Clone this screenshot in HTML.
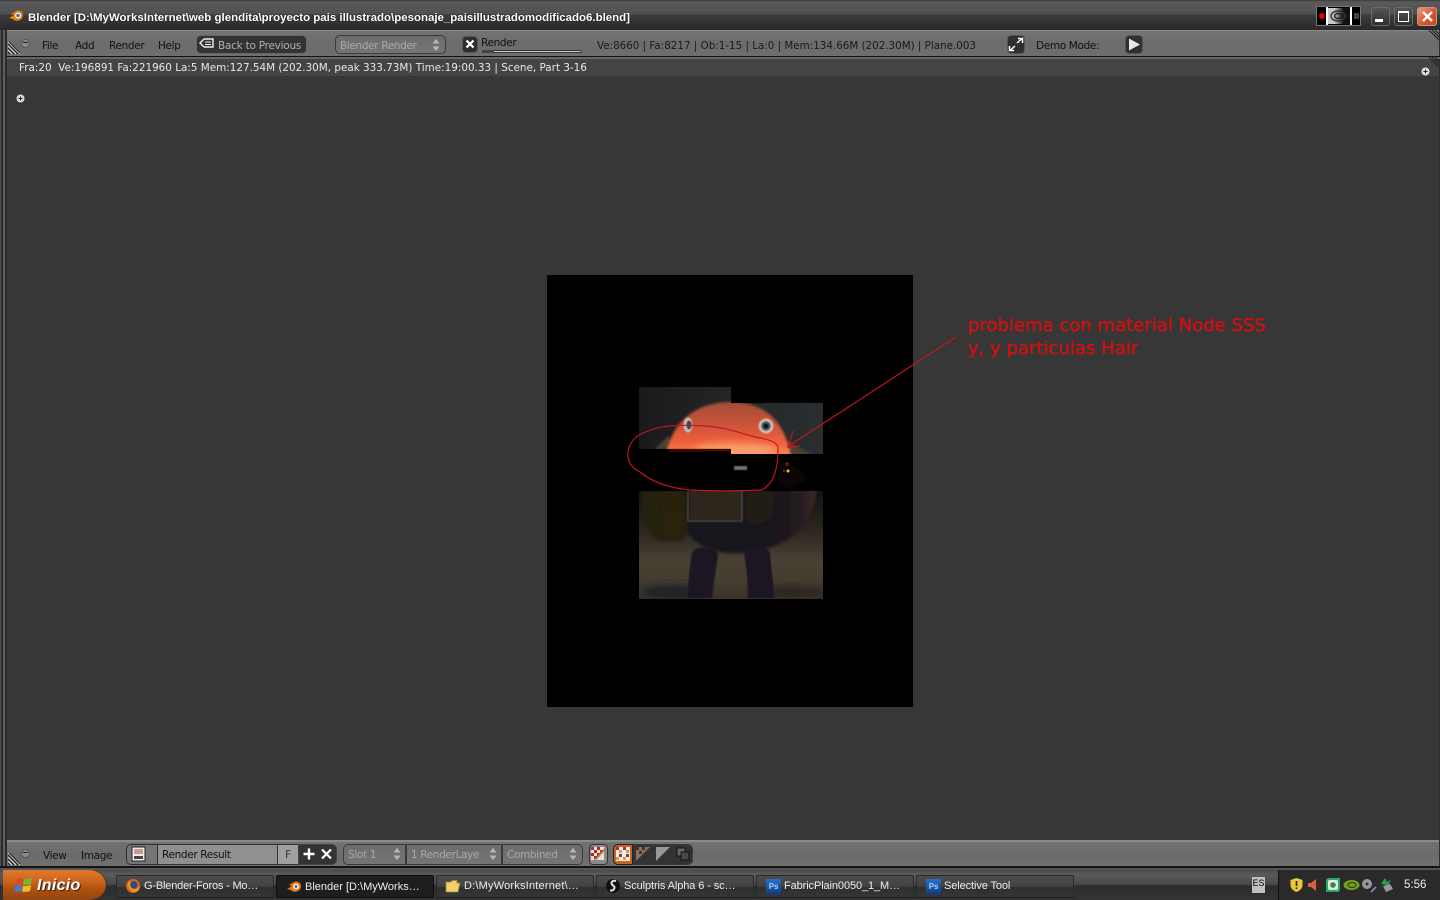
<!DOCTYPE html>
<html><head><meta charset="utf-8"><title>Blender</title>
<style>
html,body{margin:0;padding:0;width:1440px;height:900px;overflow:hidden;background:#373737}
body{position:relative;font-family:"DejaVu Sans","Liberation Sans",sans-serif;font-size:10.5px;letter-spacing:-.35px;color:#111}
.a{position:absolute;white-space:nowrap}
.hd{background:linear-gradient(#747474,#6c6c6c 50%,#6e6e6e);border-top:2px solid #8a8a8a;box-sizing:border-box}
.t{position:absolute;white-space:nowrap;line-height:13px}
.i{letter-spacing:0;font-size:10.33px}
.drk{position:absolute;box-sizing:border-box;background:#333;border:1px solid #555;border-radius:4px}
.tb{position:absolute;top:875px;height:23px;box-sizing:border-box;background:linear-gradient(#4c4c4c,#424242 50%,#2e2e2e 55%,#363636);border:1px solid #292929;border-bottom-color:#1d1d1d;border-radius:2px;color:#eee;font:11px/21px "Liberation Sans",sans-serif;letter-spacing:-.1px;white-space:nowrap}
.tb span{position:absolute;left:27px;top:0}
.sel{position:absolute;box-sizing:border-box;background:linear-gradient(#6c6c6c,#757575);border:1px solid #3a3a3a;color:#a8a8a8;line-height:21px}
</style></head><body>

<!-- title bar -->
<div class="a" style="left:0;top:0;width:1440px;height:30px;background:linear-gradient(#3a3a3a,#5a5a5a 2px,#505050 14px,#3c3c3c 15px,#2a2a2a 29px)"></div>
<svg class="a" style="left:8px;top:9px" width="17" height="14" viewBox="0 0 17 14"><path d="M1 9 L6 6 L3 5 L9 1.500 C14 1 16 5 14.500 8.500 C13 12 7 13 5 10 Z" fill="#e87d0d"/><circle cx="10" cy="6.500" r="3" fill="#fff"/><circle cx="10" cy="6.500" r="1.700" fill="#2a6fb5"/></svg>
<div class="t" style="left:28px;top:11px;color:#fff;font:bold 11.47px/14px 'Liberation Sans',sans-serif;letter-spacing:0;text-shadow:0 0 1px #000">Blender [D:\MyWorksInternet\web glendita\proyecto pais illustrado\pesonaje_paisillustradomodificado6.blend]</div>

<!-- nvidia tray in titlebar -->
<div class="a" style="left:1316px;top:6px;width:45px;height:20px;background:#000;border:1px solid #777;box-sizing:border-box"></div>
<div class="a" style="left:1319px;top:13px;width:6px;height:6px;border-radius:50%;background:#e00000"></div>
<div class="a" style="left:1326px;top:7px;width:2px;height:18px;background:#fff"></div>
<div class="a" style="left:1350px;top:7px;width:2px;height:18px;background:#fff"></div>
<div class="a" style="left:1328px;top:8px;width:22px;height:16px;background:linear-gradient(90deg,#c8c8c8 30%,#111 70%)"></div>
<svg class="a" style="left:1329px;top:9px" width="20" height="14" viewBox="0 0 20 14"><ellipse cx="9" cy="7" rx="7" ry="5" fill="none" stroke="#333" stroke-width="1.500"/><ellipse cx="9" cy="7" rx="3.500" ry="2.500" fill="none" stroke="#222" stroke-width="1.500"/></svg>
<div class="a" style="left:1354px;top:13px;width:5px;height:6px;background:#444"></div>

<div class="a" style="left:1371px;top:7px;width:19px;height:19px;box-sizing:border-box;border:1px solid #6a6a6a;border-radius:3px;background:linear-gradient(#555,#2e2e2e)"></div>
<div class="a" style="left:1375px;top:19px;width:8px;height:3px;background:#fff"></div>
<div class="a" style="left:1394px;top:7px;width:19px;height:19px;box-sizing:border-box;border:1px solid #6a6a6a;border-radius:3px;background:linear-gradient(#555,#2e2e2e)"></div>
<div class="a" style="left:1398px;top:11px;width:11px;height:11px;box-sizing:border-box;border:1px solid #fff;border-top-width:2px"></div>
<div class="a" style="left:1417px;top:7px;width:20px;height:19px;box-sizing:border-box;border:1px solid #b89a8a;border-radius:3px;background:linear-gradient(135deg,#f09a7a,#d8502a 60%,#c84a24)"></div>
<svg class="a" style="left:1421px;top:10px" width="13" height="13" viewBox="0 0 13 13"><path d="M2 2 L11 11 M11 2 L2 11" stroke="#fff" stroke-width="2.400"/></svg>

<!-- window edges -->
<div class="a" style="left:0;top:30px;width:7px;height:839px;background:#2b2b2b"></div>
<div class="a" style="left:0;top:30px;width:1px;height:839px;background:#505050"></div>
<div class="a" style="left:3px;top:30px;width:2px;height:839px;background:#5e5e5e"></div>
<div class="a" style="left:1439px;top:30px;width:1px;height:839px;background:#2e2e2e"></div>

<!-- top header -->
<div class="a hd" style="left:7px;top:30px;width:1432px;height:26px;border-top-width:1px"></div>
<div class="a" style="left:7px;top:56px;width:1433px;height:1px;background:#111"></div>
<div class="a" style="left:7px;top:57px;width:1433px;height:2px;background:#666"></div>
<svg class="a" style="left:7px;top:41px" width="14" height="14" viewBox="0 0 14 14"><path d="M1 1L13 13M1 5L9 13M1 9L5 13" stroke="#ddd" stroke-width="1"/><path d="M2 1L13 12M1 3L11 13M1 7L7 13M1 11L3 13" stroke="#222" stroke-width="1"/></svg>
<svg class="a" style="left:1428px;top:30px" width="11" height="11" viewBox="0 0 11 11"><path d="M1 0L11 10M4 0L11 7M7 0L11 4" stroke="#222"/></svg>
<div class="a" style="left:21px;top:39px;width:7px;height:7px;border-radius:50%;background:#8a8a8a;border:1px solid #555"></div>
<div class="a" style="left:23px;top:42px;width:5px;height:1px;background:#222"></div>
<div class="t" style="left:42px;top:40px">File</div>
<div class="t" style="left:75px;top:40px">Add</div>
<div class="t" style="left:109px;top:40px">Render</div>
<div class="t" style="left:158px;top:40px">Help</div>
<div class="drk" style="left:196px;top:35px;width:111px;height:19px;border-radius:5px;border-color:#666"></div>
<svg class="a" style="left:199px;top:37px" width="16" height="13" viewBox="0 0 16 13"><path d="M5 2H14V10H5 M5 2L1 6L5 10" fill="none" stroke="#eee" stroke-width="1.400"/><path d="M6 5H12M6 7.500H12" stroke="#eee"/></svg>
<div class="t" style="left:218px;top:40px;color:#b0b0b0;letter-spacing:-.25px">Back to Previous</div>
<div class="sel" style="left:335px;top:35px;width:111px;height:19px;border-radius:5px;padding-left:4px;line-height:19px"><span style="position:relative;top:1px">Blender Render</span></div>
<svg class="a" style="left:431px;top:38px" width="10" height="14" viewBox="0 0 10 14"><path d="M5 1L8.500 5.500H1.500ZM5 13L8.500 8.500H1.500Z" fill="#b8b8b8"/></svg>
<div class="drk" style="left:462px;top:36px;width:16px;height:17px;background:#2e2e2e"></div>
<svg class="a" style="left:465px;top:39px" width="10" height="10" viewBox="0 0 10 10"><path d="M1.500 1.500L8.500 8.500M8.500 1.500L1.500 8.500" stroke="#fff" stroke-width="2.200"/></svg>
<div class="t" style="left:481px;top:37px">Render</div>
<div class="a" style="left:482px;top:50px;width:100px;height:3px;box-sizing:border-box;background:#c8c8c8;border:1px solid #333;border-radius:2px"></div>
<div class="a" style="left:482px;top:50px;width:12px;height:3px;background:#444"></div>
<div class="t i" style="left:597px;top:40px;color:#1a1a1a">Ve:8660 | Fa:8217 | Ob:1-15 | La:0 | Mem:134.66M (202.30M) | Plane.003</div>
<div class="drk" style="left:1007px;top:35px;width:18px;height:19px;background:#2f2f2f"></div>
<svg class="a" style="left:1008px;top:37px" width="16" height="15" viewBox="0 0 16 15"><path d="M9 6L14 1.500M10 1.500H14.500V6M7 9L2 13.500M1.500 9V13.500H6" fill="none" stroke="#fff" stroke-width="1.500"/></svg>
<div class="t" style="left:1036px;top:40px">Demo Mode:</div>
<div class="drk" style="left:1125px;top:35px;width:18px;height:19px;background:#2f2f2f"></div>
<svg class="a" style="left:1128px;top:37px" width="13" height="15" viewBox="0 0 13 15"><path d="M1 1.500L12 7.500L1 13.500Z" fill="#e8e8e8"/></svg>

<!-- info strip -->
<div class="a" style="left:7px;top:59px;width:1432px;height:17px;background:#444"></div>
<div class="t i" style="left:19px;top:62px;color:#e8e8e8;font-size:10.4px">Fra:20&nbsp; Ve:196891 Fa:221960 La:5 Mem:127.54M (202.30M, peak 333.73M) Time:19:00.33 | Scene, Part 3-16</div>
<svg class="a" style="left:1428px;top:57px" width="11" height="11" viewBox="0 0 11 11"><path d="M1 0L11 10M4 0L11 7M7 0L11 4" stroke="#222"/></svg>
<svg class="a" style="left:1421px;top:67px" width="9" height="9" viewBox="0 0 9 9"><circle cx="4.500" cy="4.500" r="4" fill="#ddd"/><path d="M2.500 4.500H6.500M4.500 2.500V6.500" stroke="#222"/></svg>
<svg class="a" style="left:16px;top:94px" width="9" height="9" viewBox="0 0 9 9"><circle cx="4.500" cy="4.500" r="4" fill="#ddd"/><path d="M2.500 4.500H6.500M4.500 2.500V6.500" stroke="#222"/></svg>

<!-- render -->
<svg class="a" style="left:547px;top:275px;overflow:visible" width="366" height="432" viewBox="547 275 366 432">
<defs>
<linearGradient id="floor" x1="0" y1="0" x2="0" y2="1"><stop offset="0" stop-color="#151312"/><stop offset=".35" stop-color="#2a2520"/><stop offset=".65" stop-color="#4a4034"/><stop offset=".85" stop-color="#443c30"/><stop offset="1" stop-color="#383329"/></linearGradient>
<linearGradient id="bg" x1="0" y1="0" x2="1" y2="0"><stop offset="0" stop-color="#1a1a1c"/><stop offset="1" stop-color="#2b2f31"/></linearGradient>
<linearGradient id="head" x1="0" y1="0" x2="0" y2="1"><stop offset="0" stop-color="#a24e36"/><stop offset=".4" stop-color="#c8533a"/><stop offset=".75" stop-color="#f0603c"/><stop offset="1" stop-color="#ff8a58"/></linearGradient>
<linearGradient id="ball" x1="0" y1="0" x2="1" y2="0"><stop offset="0" stop-color="#14121a"/><stop offset=".65" stop-color="#17141c"/><stop offset=".88" stop-color="#241c20"/><stop offset="1" stop-color="#3c2a24"/></linearGradient>
<clipPath id="tiles"><path d="M639 387H731V403H823V454H731V449H639Z"/><path d="M639 491H823V599H639Z"/></clipPath>
<filter id="b" x="-20%" y="-20%" width="140%" height="140%"><feGaussianBlur stdDeviation="1.300"/></filter>
<filter id="s"><feGaussianBlur stdDeviation=".6"/></filter>
<filter id="b3" x="-40%" y="-40%" width="180%" height="180%"><feGaussianBlur stdDeviation="4"/></filter>
</defs>
<rect x="547" y="275" width="366" height="432" fill="#000"/>
<g clip-path="url(#tiles)">
<rect x="639" y="387" width="184" height="70" fill="url(#bg)"/>
<rect x="639" y="491" width="184" height="108" fill="url(#floor)"/>
<ellipse cx="675" cy="592" rx="34" ry="7" fill="#1c2428" filter="url(#b3)"/>
<ellipse cx="790" cy="592" rx="40" ry="6" fill="#2a2822" filter="url(#b3)"/>
<path d="M655 449L668 436L680 449ZM785 440L815 456H780Z" fill="#4e4230" filter="url(#b)"/>
<path d="M666 456C670 428 690 402 731 402C772 402 786 430 791 456Z" fill="url(#head)" filter="url(#b)"/>
<ellipse cx="735" cy="450" rx="42" ry="7" fill="#ffb27a" opacity=".7" filter="url(#b3)"/>
<ellipse cx="688" cy="425" rx="4.500" ry="7.500" fill="#c8c0ba" filter="url(#s)"/><ellipse cx="689" cy="425" rx="2.600" ry="4.500" fill="#33484a" filter="url(#s)"/>
<circle cx="766" cy="426" r="7.500" fill="#d6b8aa" filter="url(#s)"/><circle cx="766" cy="426" r="4.500" fill="#2a5056" filter="url(#s)"/><circle cx="766" cy="426" r="2" fill="#0b1214"/>
<path d="M684 480H816C820 520 790 553 735 553C705 553 690 540 684 525Z" fill="url(#ball)" filter="url(#b)"/>
<path d="M642 491H684C690 510 690 535 682 541H660C645 535 640 505 642 491Z" fill="#22200e" filter="url(#b)"/>
<path d="M660 491H680L684 525L675 540H665Z" fill="#2e240e" opacity=".6" filter="url(#b)"/>
<rect x="690" y="491" width="52" height="29" fill="#2e261c" filter="url(#s)"/>
<path d="M688 491V521H742V491" fill="none" stroke="#4a4840" stroke-width="1.500" filter="url(#s)"/>
<path d="M745 491H775L772 518L755 526L745 520Z" fill="#211a12" filter="url(#b)"/>
<path d="M692 553C695 545 716 545 718 555C715 575 713 590 712 598H688C688 580 690 565 692 553Z" fill="#1b1823" filter="url(#s)"/>
<path d="M744 553C746 545 772 545 770 555C772 575 774 590 774 598H748C748 580 746 565 744 553Z" fill="#1e1822" filter="url(#s)"/>
</g>
<rect x="670" y="449" width="60" height="2.500" fill="#4a0a06" filter="url(#s)"/>
<rect x="734" y="466" width="13" height="4" fill="#7a6e66" filter="url(#s)"/>
<path d="M778 465C782 462 795 460 808 480L790 488L778 484Z" fill="#0a0605"/>
<circle cx="788" cy="471" r="1.500" fill="#ffc020"/><circle cx="784" cy="471" r="1" fill="#a03010"/><circle cx="787" cy="464" r="2" fill="#5a2010"/>
<g fill="none" stroke="#c4161c" stroke-width="1.150">
<path d="M778 447C777 442 768 439 755 437C740 433 725 427 705 426C690 425 670 425 657 428C640 433 630 438 628 452C627 462 632 468 640 472C652 482 670 488 690 490C710 491 740 491 762 490C772 484 778 474 778 447Z"/>
<path d="M787 447L956 337"/>
<path d="M788 448L793 431M788 447L800 446"/>
</g>
</svg>
<div class="t" style="left:968px;top:314px;color:#d80e0e;font-size:18px;line-height:23px;letter-spacing:.03px;white-space:pre;-webkit-text-stroke:.35px #d80e0e">problema con material Node SSS
y, y particulas Hair</div>

<!-- bottom header -->
<div class="a hd" style="left:7px;top:840px;width:1432px;height:26px;background:linear-gradient(#727272,#6b6b6b 50%,#707070)"></div>
<div class="a" style="left:0;top:866px;width:1440px;height:2px;background:#141414"></div>
<div class="a" style="left:0;top:868px;width:1440px;height:2px;background:#555"></div>
<svg class="a" style="left:7px;top:852px" width="14" height="14" viewBox="0 0 14 14"><path d="M1 1L13 13M1 5L9 13M1 9L5 13" stroke="#ddd"/><path d="M2 1L13 12M1 3L11 13M1 7L7 13M1 11L3 13" stroke="#222"/></svg>
<div class="a" style="left:21px;top:849px;width:7px;height:7px;border-radius:50%;background:#8a8a8a;border:1px solid #555"></div>
<div class="a" style="left:23px;top:852px;width:5px;height:1px;background:#222"></div>
<div class="t" style="left:43px;top:850px">View</div>
<div class="t" style="left:81px;top:850px">Image</div>

<div class="a" style="left:126px;top:844px;width:32px;height:21px;box-sizing:border-box;background:#757575;border:1px solid #2e2e2e;border-radius:5px 0 0 5px"></div>
<svg class="a" style="left:131px;top:846px" width="15" height="16" viewBox="0 0 15 16"><rect x="1" y="1" width="13" height="14" fill="#eee" stroke="#222"/><rect x="3" y="3" width="9" height="5" fill="#c59b90"/><rect x="3" y="10" width="9" height="3" fill="#444"/></svg>
<div class="a" style="left:158px;top:844px;width:120px;height:21px;box-sizing:border-box;background:#909090;border:1px solid #333;border-left:0;padding-left:4px;line-height:21px">Render Result</div>
<div class="a" style="left:278px;top:844px;width:20px;height:21px;box-sizing:border-box;background:#a0a0a0;border-top:1px solid #333;border-bottom:1px solid #333;text-align:center;line-height:21px;color:#333">F</div>
<div class="a" style="left:298px;top:844px;width:39px;height:21px;box-sizing:border-box;background:#333;border-radius:0 5px 5px 0;border:1px solid #444"></div>
<svg class="a" style="left:302px;top:847px" width="32" height="14" viewBox="0 0 32 14"><path d="M7 1.500V12.500M1.500 7H12.500" stroke="#fff" stroke-width="2.400"/><path d="M20 2.500L29 11.500M29 2.500L20 11.500" stroke="#fff" stroke-width="2.200"/></svg>

<div class="sel" style="left:343px;top:844px;width:63px;height:21px;border-radius:5px 0 0 5px;padding-left:4px">Slot 1</div>
<div class="sel" style="left:406px;top:844px;width:96px;height:21px;padding-left:4px">1 RenderLaye</div>
<div class="sel" style="left:502px;top:844px;width:81px;height:21px;border-radius:0 5px 5px 0;padding-left:4px">Combined</div>
<svg class="a" style="left:392px;top:847px" width="10" height="14" viewBox="0 0 10 14"><path d="M5 1L8.500 5.500H1.500ZM5 13L8.500 8.500H1.500Z" fill="#b8b8b8"/></svg>
<svg class="a" style="left:488px;top:847px" width="10" height="14" viewBox="0 0 10 14"><path d="M5 1L8.500 5.500H1.500ZM5 13L8.500 8.500H1.500Z" fill="#b8b8b8"/></svg>
<svg class="a" style="left:568px;top:847px" width="10" height="14" viewBox="0 0 10 14"><path d="M5 1L8.500 5.500H1.500ZM5 13L8.500 8.500H1.500Z" fill="#b8b8b8"/></svg>

<div class="a" style="left:589px;top:844px;width:19px;height:21px;box-sizing:border-box;background:#8a8a8a;border:1px solid #333;border-radius:4px"></div>
<svg class="a" style="left:590px;top:846px" width="17" height="16" viewBox="0 0 17 16"><rect x="1" y="1" width="13" height="13" fill="#e6e0da"/><path d="M1 1h3v3H1zM7 1h3v3H7zM4 4h3v3H4zM10 4h3v3h-3zM1 7h3v3H1zM7 7h3v3H7zM4 10h3v3H4z" fill="#a03028"/><path d="M5 14L15 3" stroke="#c07840" stroke-width="2"/></svg>
<div class="a" style="left:613px;top:844px;width:80px;height:21px;box-sizing:border-box;background:#333;border:1px solid #3a3a3a;border-radius:5px"></div>
<div class="a" style="left:613px;top:844px;width:20px;height:21px;box-sizing:border-box;background:#c8641e;border:1px solid #222;border-radius:5px 0 0 5px"></div>
<svg class="a" style="left:616px;top:847px" width="14" height="14" viewBox="0 0 14 14"><rect width="14" height="14" fill="#eee"/><path d="M0 0h3v3H0zM7 0h3v3H7zM3 7h3v3H3zM10 7h3v3h-3z" fill="#b02a2a"/><path d="M3 3h3v3H3zM10 3h3v3h-3zM0 10h3v3H0zM7 10h3v3H7z" fill="#c8a050"/></svg>
<svg class="a" style="left:636px;top:847px" width="14" height="14" viewBox="0 0 14 14"><path d="M0 14V0H14Z" fill="#8a7068"/><path d="M0 0h3v3H0zM6 0h3v3H6zM3 4h3v3H3z" fill="#5a2a2a"/></svg>
<svg class="a" style="left:656px;top:847px" width="14" height="14" viewBox="0 0 14 14"><rect width="14" height="14" fill="#222"/><path d="M0 14L14 0V14Z" fill="#333"/><path d="M0 14V0H14Z" fill="#999"/></svg>
<svg class="a" style="left:676px;top:847px" width="14" height="14" viewBox="0 0 14 14"><rect x="1" y="1" width="8" height="8" fill="#666" stroke="#111"/><rect x="5" y="5" width="8" height="8" fill="#484848" stroke="#111"/></svg>

<!-- taskbar -->
<div class="a" style="left:0;top:870px;width:1440px;height:30px;background:linear-gradient(#494949,#5a5a5a 4px,#4a4a4a 14px,#2c2c2c 16px,#333 30px)"></div>
<div class="a" style="left:3px;top:870px;width:104px;height:30px;border-radius:0 18px 18px 0/0 15px 15px 0;background:linear-gradient(#e07a2e,#ce661d 35%,#b4520f 60%,#8f4410);border-right:1px solid #3a2a1a;box-sizing:border-box"></div>
<svg class="a" style="left:13px;top:876px" width="21" height="19" viewBox="0 0 21 19"><path d="M4 3C6 2 8 2 10 3L9 9C7 8 5 8 2 9Z" fill="#d84a2a"/><path d="M11 3C14 4 16 3 19 2L18 8C15 9 13 9 10 8.500Z" fill="#7ab82e"/><path d="M2 10C5 9 7 9 9 10L8 16C6 15 3 15 1 16Z" fill="#4a7ad0"/><path d="M10 10C13 10 15 10 18 9L17 15C14 16 11 16 9 15.500Z" fill="#e8c030"/></svg>
<div class="t" style="left:37px;top:877px;color:#fff;font:italic bold 16px/18px 'Liberation Sans',sans-serif;text-shadow:1px 1px 1px #222;letter-spacing:.3px">Inicio</div>

<div class="tb" style="left:116px;width:158px"><span style="letter-spacing:-.18px">G-Blender-Foros - Mo…</span>
<svg style="position:absolute;left:8px;top:2px" width="16" height="16" viewBox="0 0 16 16"><circle cx="8" cy="8" r="7" fill="#d8661a"/><circle cx="8.500" cy="7" r="4" fill="#2a4a8a"/><path d="M3 4C2 9 5 14 10 14C13 14 15 11 15 8C13 11 8 12 6 9C5 7 5 4 7 3Z" fill="#e8941e"/></svg></div>
<div class="tb" style="left:276px;width:158px;background:#1e1e1e;border-color:#0e0e0e"><span style="left:28px;top:1px;letter-spacing:0">Blender [D:\MyWorks…</span>
<svg style="position:absolute;left:9px;top:4px" width="17" height="14" viewBox="0 0 17 14"><path d="M1 9L6 6L3 5L9 1.500C14 1 16 5 14.500 8.500C13 12 7 13 5 10Z" fill="#e87d0d"/><circle cx="10" cy="6.500" r="2.800" fill="#fff"/><circle cx="10" cy="6.500" r="1.500" fill="#2a6fb5"/></svg></div>
<div class="tb" style="left:436px;width:158px"><span style="letter-spacing:.2px">D:\MyWorksInternet\…</span>
<svg style="position:absolute;left:8px;top:3px" width="16" height="14" viewBox="0 0 16 14"><path d="M1 3H6L7 1.500H12V4H15L13 13H1Z" fill="#f0d070" stroke="#a08030" stroke-width=".8"/></svg></div>
<div class="tb" style="left:596px;width:158px"><span>Sculptris Alpha 6 - sc…</span>
<svg style="position:absolute;left:8px;top:2px" width="16" height="16" viewBox="0 0 16 16"><circle cx="8" cy="8" r="7" fill="#111"/><path d="M11 3C7 2 5 5 8 7.500C11 9.500 9 13 5 12.500" fill="none" stroke="#ddd" stroke-width="2"/></svg></div>
<div class="tb" style="left:756px;width:158px"><span>FabricPlain0050_1_M…</span>
<div style="position:absolute;left:9px;top:3px;width:15px;height:15px;background:linear-gradient(#2a70c8,#0c3c88);color:#a8d0f8;font:bold 8px/15px 'Liberation Sans',sans-serif;text-align:center">Ps</div></div>
<div class="tb" style="left:916px;width:158px"><span>Selective Tool</span>
<div style="position:absolute;left:9px;top:3px;width:15px;height:15px;background:linear-gradient(#2a70c8,#0c3c88);color:#a8d0f8;font:bold 8px/15px 'Liberation Sans',sans-serif;text-align:center">Ps</div></div>

<div class="a" style="left:1252px;top:877px;width:13px;height:16px;background:#c0c0c0;color:#111;font:10px/16px 'Liberation Mono',monospace;letter-spacing:0;text-align:center;overflow:hidden">ES</div>
<div class="a" style="left:1278px;top:870px;width:162px;height:30px;background:#2a2a2a;border-left:1px solid #111;box-sizing:border-box"></div>
<svg class="a" style="left:1289px;top:877px" width="15" height="16" viewBox="0 0 15 16"><path d="M7.500 1L13.500 3V8C13.500 12 10 14 7.500 15C5 14 1.500 12 1.500 8V3Z" fill="#e8c83a"/><path d="M7.500 4V9M7.500 10.500V12" stroke="#222" stroke-width="1.600"/></svg>
<svg class="a" style="left:1307px;top:877px" width="15" height="16" viewBox="0 0 15 16"><path d="M1 6H4L9 2V14L4 10H1Z" fill="#d8603a"/><path d="M11 3C14 6 14 10 11 13" stroke="#4a1a10" stroke-width="2" fill="none"/></svg>
<svg class="a" style="left:1325px;top:877px" width="16" height="16" viewBox="0 0 16 16"><path d="M1 4Q1 1 4 1H15V12Q15 15 12 15H1Z" fill="#2aa868"/><rect x="3" y="3" width="10" height="10" rx="2" fill="#dfeadc"/><circle cx="8" cy="8" r="2.800" fill="#2a8a50"/></svg>
<svg class="a" style="left:1343px;top:879px" width="17" height="12" viewBox="0 0 17 12"><ellipse cx="8.500" cy="6" rx="8" ry="5" fill="#74a020"/><ellipse cx="9" cy="6" rx="4" ry="2.500" fill="none" stroke="#24380a"/></svg>
<svg class="a" style="left:1361px;top:878px" width="17" height="15" viewBox="0 0 17 15"><circle cx="6" cy="6" r="5" fill="#999"/><circle cx="6" cy="6" r="1.500" fill="#333"/><path d="M10 14L15 9" stroke="#8a9ad8" stroke-width="1.500"/></svg>
<svg class="a" style="left:1379px;top:877px" width="15" height="16" viewBox="0 0 15 16"><path d="M2 7L6 1L8 5L12 3L9 8Z" fill="#28a048"/><path d="M4 9L11 7L14 12L7 15Z" fill="#999"/></svg>
<div class="t" style="left:1404px;top:879px;color:#eee;font:11.500px/13px 'Liberation Sans',sans-serif;letter-spacing:0">5:56</div>

</body></html>
